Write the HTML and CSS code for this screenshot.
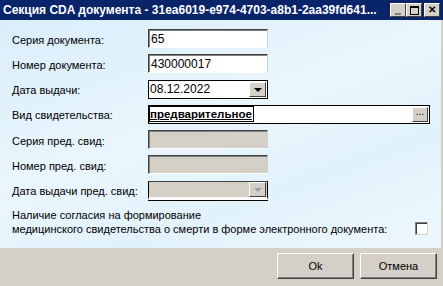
FILE: index.html
```html
<!DOCTYPE html>
<html lang="ru">
<head>
  <meta charset="UTF-8" />
  <title>Секция CDA документа</title>
  <link rel="stylesheet" href="styles.css">
</head>
<body>
  <div class="window">
    <div class="titlebar">
      <span class="title">Секция CDA документа - 31ea6019-e974-4703-a8b1-2aa39fd641...</span>
      <div class="controls">
        <span class="ctl ctl-min"><i></i></span>
        <span class="ctl ctl-max"><i></i></span>
        <span class="ctl ctl-close">&#x2715;</span>
      </div>
    </div>

    <div class="content">
      <div class="form">
        <label>Серия документа:</label>
        <div class="field">65</div>

        <label>Номер документа:</label>
        <div class="field">430000017</div>

        <label>Дата выдачи:</label>
        <div class="field combo focus-frame">
          <span class="value">08.12.2022</span>
          <span class="drop"><i class="arrow"></i></span>
        </div>

        <label>Вид свидетельства:</label>
        <div class="field wide focus-frame">
          <span class="value selected">предварительное</span>
          <span class="dots">...</span>
        </div>

        <label>Серия пред. свид:</label>
        <div class="field disabled"></div>

        <label>Номер пред. свид:</label>
        <div class="field disabled"></div>

        <label>Дата выдачи пред. свид:</label>
        <div class="field combo disabled-combo">
          <span class="value"></span>
          <span class="drop"><i class="arrow grey"></i></span>
        </div>
      </div>

      <div class="consent">
        <p>Наличие согласия на формирование<br>медицинского свидетельства о смерти в форме электронного документа:</p>
        <span class="checkbox"></span>
      </div>
    </div>

    <div class="footer">
      <button class="btn">Ok</button>
      <button class="btn">Отмена</button>
    </div>
  </div>
</body>
</html>
```

FILE: styles.css
```css
body {
  margin: 0;
  font-family: "Liberation Sans", Arial, sans-serif;
  font-size: 11px;
  color: #000;
}

.window {
  width: 443px;
  height: 286px;
  display: flex;
  flex-direction: column;
  overflow: hidden;
}

/* Заголовок окна */
.titlebar {
  height: 20px;
  background-color: #0a246a;
  color: #fff;
  display: flex;
  align-items: center;
  justify-content: space-between;
  padding: 0 3px 0 3px;
}

.title {
  font-weight: bold;
  font-size: 12px;
  white-space: nowrap;
  overflow: hidden;
}

.controls {
  display: flex;
}

.ctl {
  width: 14px;
  height: 12px;
  background-color: #d4d0c8;
  border-top: 1px solid #fff;
  border-left: 1px solid #fff;
  border-right: 1px solid #404040;
  border-bottom: 1px solid #404040;
  display: flex;
  align-items: center;
  justify-content: center;
  color: #000;
  font-size: 10px;
  font-weight: bold;
  line-height: 1;
}

.ctl-close {
  margin-left: 2px;
}

.ctl-min i {
  display: block;
  width: 6px;
  height: 2px;
  background: #808080;
  margin-top: 7px;
}

.ctl-max i {
  display: block;
  width: 7px;
  height: 6px;
  border: 1px solid #000;
  border-top-width: 2px;
}

/* Основная область */
.content {
  flex: 1;
  background: linear-gradient(160deg, #d9eefa 0%, #eaf6fd 45%, #e2f2fb 70%, #eef8fe 100%);
  border-right: 2px solid #d4d0c8;
  padding: 9px 0 0 12px;
}

.form {
  display: grid;
  grid-template-columns: 136px auto;
  grid-auto-rows: 19px;
  row-gap: 6.3px;
  align-items: center;
}

.form label {
  padding-top: 2px;
  white-space: nowrap;
}

.field {
  width: 120px;
  height: 19px;
  box-sizing: border-box;
  background: #fff;
  border-top: 1px solid #404040;
  border-left: 1px solid #404040;
  border-right: 1px solid #d4d0c8;
  border-bottom: 1px solid #fff;
  box-shadow: inset 1px 1px 0 #808080;
  font-size: 12px;
  padding: 1px 2px 0 2px;
  display: flex;
  align-items: center;
  line-height: 15px;
}

.field.wide {
  width: 282px;
}

.focus-frame {
  border: 1px solid #000;
  box-shadow: none;
  padding: 0 1px 0 1px;
}

.wide.focus-frame {
  padding-left: 0;
}

.combo .value {
  flex: 1;
}

.value.selected {
  font-size: 11.5px;
  font-weight: bold;
  text-decoration: underline;
  border: 1px solid #000;
  padding: 0 1px 0 0;
  line-height: 14px;
}

.drop,
.dots {
  width: 17px;
  height: 15px;
  box-sizing: border-box;
  background: #d4d0c8;
  border-top: 1px solid #fff;
  border-left: 1px solid #fff;
  border-right: 1px solid #404040;
  border-bottom: 1px solid #404040;
  display: flex;
  align-items: center;
  justify-content: center;
}

.dots {
  width: 16px;
  margin-left: auto;
  font-size: 10px;
  align-items: flex-end;
  padding-bottom: 2px;
}

.arrow {
  width: 0;
  height: 0;
  border-left: 4px solid transparent;
  border-right: 4px solid transparent;
  border-top: 4px solid #000;
  margin-top: 2px;
}

.arrow.grey {
  border-top-color: #a0a0a0;
}

.disabled {
  background: #d4d0c8;
}

.disabled-combo {
  background: #d4d0c8;
  border: 1px solid #000;
  border-top-color: #404040;
  border-bottom: 3px solid #fff;
  padding: 0 1px;
  box-shadow: 0 1px 0 #000;
}

/* Согласие */
.consent {
  display: flex;
  align-items: flex-end;
  margin-top: 8px;
  width: 416px;
}

.consent p {
  margin: 0;
  line-height: 14px;
  flex: 1;
  white-space: nowrap;
}

.checkbox {
  width: 13px;
  height: 13px;
  box-sizing: border-box;
  background: #fff;
  border-top: 1px solid #808080;
  border-left: 1px solid #808080;
  border-right: 1px solid #d4d0c8;
  border-bottom: 1px solid #d4d0c8;
  box-shadow: inset 1px 1px 0 #404040;
  margin-bottom: 1px;
}

/* Нижняя панель */
.footer {
  height: 38px;
  background-color: #d4d0c8;
  display: flex;
  justify-content: flex-end;
  align-items: flex-start;
  gap: 6px;
  padding: 5px 6px 0 0;
  box-sizing: border-box;
}

.btn {
  width: 77px;
  height: 26px;
  background-color: #d4d0c8;
  border-top: 1px solid #fff;
  border-left: 1px solid #fff;
  border-right: 1px solid #404040;
  border-bottom: 1px solid #404040;
  box-shadow: inset -1px -1px 0 #808080;
  font-family: "Liberation Sans", Arial, sans-serif;
  font-size: 11px;
  color: #000;
  padding: 0;
}
```
